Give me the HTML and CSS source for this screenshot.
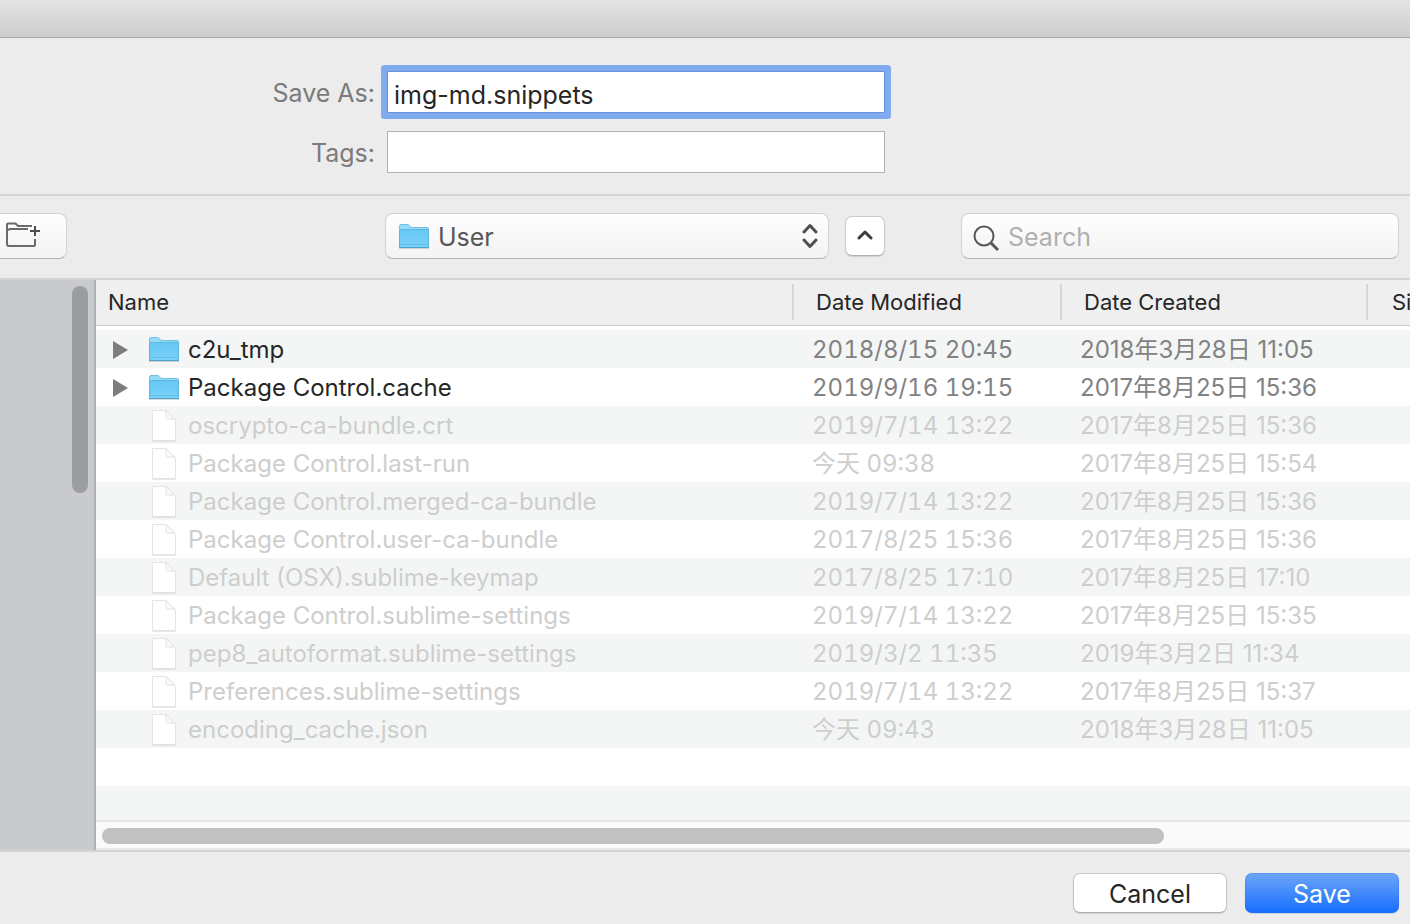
FILE: index.html
```html
<!DOCTYPE html>
<html lang="en">
<head>
<meta charset="utf-8">
<meta name="viewport" content="width=device-width, initial-scale=1">
<title>Save</title>
<link rel="stylesheet" href="styles.css">
</head>
<body>
<svg class="defs" width="0" height="0" aria-hidden="true">
  <defs>
    <linearGradient id="folder-fill" x1="0" y1="0" x2="0" y2="1">
      <stop offset="0" stop-color="#66c8f5"/>
      <stop offset="1" stop-color="#7bd2f8"/>
    </linearGradient>
    <symbol id="folder" viewBox="0 0 32 28">
      <path d="M1 25h30v1H1z" fill="#000" opacity=".15"/>
      <path d="M1.500 24V3.200Q1.500 1.500 3 1.500H9.500Q10.600 1.500 11.400 2.600L12.300 3.800Q12.800 4.500 14 4.500H29.500Q30.500 4.500 30.500 5.500V24Z" fill="#97dbf8" stroke="#72bfe0"/>
      <path d="M1 7h30v17.500Q31 25 30.500 25H1.500Q1 25 1 24.500Z" fill="url(#folder-fill)"/>
      <path d="M1.500 7V24M30.500 7V24M2 6.500H30" stroke="#5cb6dd" fill="none"/>
      <path d="M2 21.500H30" stroke="#62c0ea" fill="none"/>
      <path d="M1 24.500H31" stroke="#4aa3cb" fill="none"/>
    </symbol>
    <symbol id="file" viewBox="0 0 26 32">
      <path d="M1.500 31.500H24.500" stroke="#000" opacity=".09" fill="none"/>
      <path d="M1.500 .500H15L24.500 10V30.500H1.500Z" fill="#fff" stroke="#e3e4e4"/>
      <path d="M15 .500V7.500Q15 9 16.500 9H23.500Z" fill="#fafafa" stroke="#e0e1e1"/>
    </symbol>
    <symbol id="triangle" viewBox="0 0 16 18"><path d="M0 0L15 9L0 18Z" fill="#7d7d7d"/></symbol>
  </defs>
</svg>
<div class="dialog">
  <div class="titlebar"></div>

  <form class="fields">
    <label for="save-as">Save As:</label>
    <input class="field field-active" id="save-as" type="text" value="img-md.snippets">
    <label for="tags">Tags:</label>
    <input class="field" id="tags" type="text">
  </form>

  <div class="toolbar">
    <button class="control new-folder" type="button" aria-label="New Folder">
      <svg width="36" height="26" viewBox="0 0 36 26" fill="none" stroke="#6b6b6b" stroke-width="2">
        <path d="M27 4H13L10.500 1.500H3Q2 1.500 2 2.500V22Q2 24 4 24H29Q30 24 30 23V17M3 8L5 7H23"/>
        <path d="M30 4V14M25 9H35" stroke="#4c4c4c"/>
      </svg>
    </button>
    <div class="location">
      <div class="popup">
        <svg class="popup-folder" width="32" height="28" aria-hidden="true"><use href="#folder"/></svg>
        <select class="control" aria-label="Folder"><option>User</option></select>
        <svg class="popup-arrows" width="16" height="26" viewBox="0 0 16 26" fill="none" stroke="#4f4f4f" stroke-width="3" stroke-linecap="round" stroke-linejoin="round" aria-hidden="true">
          <path d="M2 9L8 2.500L14 9M2 17L8 23.500L14 17"/>
        </svg>
      </div>
      <button class="collapse" type="button" aria-label="Show less">
        <svg width="16" height="10" viewBox="0 0 16 10" fill="none" stroke="#3c3c3c" stroke-width="3" stroke-linecap="round" stroke-linejoin="round"><path d="M2 8L8 2L14 8"/></svg>
      </button>
    </div>
    <div class="search">
      <svg class="search-icon" width="28" height="28" viewBox="0 0 28 28" fill="none" stroke="#575757" stroke-width="2" aria-hidden="true">
        <circle cx="11" cy="11" r="9.500"/><path d="M18 18L25 25" stroke-width="3"/>
      </svg>
      <input class="control" type="search" placeholder="Search" aria-label="Search">
    </div>
  </div>

  <div class="browser">
    <aside class="sidebar"><div class="sidebar-thumb"></div></aside>
    <main class="list">
      <div class="rows">
        <table>
          <colgroup><col><col class="col-modified"><col class="col-created"><col class="col-size"></colgroup>
          <thead>
            <tr><th><span>Name</span></th><th><span>Date Modified</span></th><th><span>Date Created</span></th><th><span>Size</span></th></tr>
          </thead>
          <tbody>
            <tr class="folder"><td><div class="name"><svg class="disclosure" width="16" height="18"><use href="#triangle"/></svg><svg class="icon" width="32" height="28"><use href="#folder"/></svg>c2u_tmp</div></td><td>2018/8/15 20:45</td><td>2018年3月28日 11:05</td><td></td></tr>
            <tr class="folder"><td><div class="name"><svg class="disclosure" width="16" height="18"><use href="#triangle"/></svg><svg class="icon" width="32" height="28"><use href="#folder"/></svg>Package Control.cache</div></td><td>2019/9/16 19:15</td><td>2017年8月25日 15:36</td><td></td></tr>
            <tr><td><div class="name"><svg class="icon" width="26" height="32"><use href="#file"/></svg>oscrypto-ca-bundle.crt</div></td><td>2019/7/14 13:22</td><td>2017年8月25日 15:36</td><td></td></tr>
            <tr><td><div class="name"><svg class="icon" width="26" height="32"><use href="#file"/></svg>Package Control.last-run</div></td><td>今天 09:38</td><td>2017年8月25日 15:54</td><td></td></tr>
            <tr><td><div class="name"><svg class="icon" width="26" height="32"><use href="#file"/></svg>Package Control.merged-ca-bundle</div></td><td>2019/7/14 13:22</td><td>2017年8月25日 15:36</td><td></td></tr>
            <tr><td><div class="name"><svg class="icon" width="26" height="32"><use href="#file"/></svg>Package Control.user-ca-bundle</div></td><td>2017/8/25 15:36</td><td>2017年8月25日 15:36</td><td></td></tr>
            <tr><td><div class="name"><svg class="icon" width="26" height="32"><use href="#file"/></svg>Default (OSX).sublime-keymap</div></td><td>2017/8/25 17:10</td><td>2017年8月25日 17:10</td><td></td></tr>
            <tr><td><div class="name"><svg class="icon" width="26" height="32"><use href="#file"/></svg>Package Control.sublime-settings</div></td><td>2019/7/14 13:22</td><td>2017年8月25日 15:35</td><td></td></tr>
            <tr><td><div class="name"><svg class="icon" width="26" height="32"><use href="#file"/></svg>pep8_autoformat.sublime-settings</div></td><td>2019/3/2 11:35</td><td>2019年3月2日 11:34</td><td></td></tr>
            <tr><td><div class="name"><svg class="icon" width="26" height="32"><use href="#file"/></svg>Preferences.sublime-settings</div></td><td>2019/7/14 13:22</td><td>2017年8月25日 15:37</td><td></td></tr>
            <tr><td><div class="name"><svg class="icon" width="26" height="32"><use href="#file"/></svg>encoding_cache.json</div></td><td>今天 09:43</td><td>2018年3月28日 11:05</td><td></td></tr>
          </tbody>
        </table>
        <div class="empty-rows"></div>
      </div>
      <div class="scrollbar"><div class="scrollbar-thumb"></div></div>
    </main>
  </div>

  <footer class="actions">
    <button class="push" type="button">Cancel</button>
    <button class="push push-default" type="submit">Save</button>
  </footer>
</div>
</body>
</html>
```
FILE: styles.css
```css
* { box-sizing: border-box; }

body {
  margin: 0;
  background: #ececec;
  color: #262626;
  font-family: Inter, "Noto Sans CJK SC", sans-serif;
  font-size: 25px;
}

input, select, button { font: inherit; color: inherit; margin: 0; outline: 0; }
svg { display: block; flex: none; }
.defs { position: absolute; }

.dialog { display: flex; flex-direction: column; min-height: 100vh; }

.titlebar {
  height: 38px;
  background: linear-gradient(#e3e3e3, #cdcdcd);
  border-bottom: 1px solid #a5a5a5;
}

.fields {
  display: grid;
  grid-template-columns: 375px minmax(0, 498px);
  column-gap: 12px;
  row-gap: 18px;
  align-items: center;
  padding: 33px 0 21px;
  border-bottom: 2px solid #d4d4d4;
}
.fields label { padding-top: 3px; color: #7b7b7b; text-align: right; line-height: 39px; }

.field {
  width: 100%;
  height: 42px;
  padding: 6px 6px 0;
  background: #fff;
  border: 1px solid #b0b0b0;
  border-radius: 0;
}
.field-active { border-color: #6592d8; box-shadow: 0 0 0 6px #80abef; border-radius: 1px; }

.toolbar {
  display: grid;
  grid-template-columns: 385px minmax(0, 500px) minmax(0, 1fr);
  align-items: center;
  padding: 17px 0 19px;
  border-bottom: 2px solid #d4d4d4;
}

.control {
  height: 46px;
  background: linear-gradient(#fefefe, #f3f3f3);
  border: 1px solid #d2d2d2;
  border-bottom-color: #b2b2b2;
  border-radius: 8px;
  appearance: none;
}

.new-folder {
  width: 67px;
  padding: 0 0 3px 5px;
  border-left: 0;
  border-radius: 0 8px 8px 0;
}

.location { display: flex; align-items: center; gap: 16px; }
.popup { position: relative; flex: 1; min-width: 0; color: #575757; }
.popup select { display: block; width: 100%; padding: 2px 40px 0 52px; }
.popup-folder { position: absolute; left: 13px; top: 10px; }
.popup-arrows { position: absolute; right: 11px; top: 10px; }

.collapse {
  display: flex;
  align-items: center;
  justify-content: center;
  width: 40px;
  height: 40px;
  padding: 0 0 3px;
  background: #fff;
  border: 1px solid #cbcbcb;
  border-bottom-color: #b2b2b2;
  border-radius: 7px;
  box-shadow: 0 1px 1px #d0d0d0;
}

.search { position: relative; padding: 0 11px 0 76px; }
.search input { display: block; width: 100%; padding: 2px 12px 0 46px; }
.search input::placeholder { color: #b0b0b0; opacity: 1; }
.search-icon { position: absolute; left: 88px; top: 12px; }

.browser {
  display: flex;
  flex: 1;
  border-bottom: 2px solid #d4d4d4;
}

.sidebar {
  flex: none;
  width: 96px;
  padding: 6px 6px 0 72px;
  background: #c9cacd;
  border-right: 2px solid #aeb0b5;
}
.sidebar-thumb { width: 16px; height: 207px; background: #9c9da0; border-radius: 8px; }

.list { display: flex; flex: 1; flex-direction: column; min-width: 0; background: #fff; }
.rows { display: flex; flex: 1; flex-direction: column; overflow: hidden; }

table { width: 100%; table-layout: fixed; border-collapse: collapse; }
.col-modified { width: 268px; }
.col-created { width: 306px; }
.col-size { width: 42px; }

thead { background: #efefef; box-shadow: 0 1px 0 #c8c8c8; }
th { padding: 4px 0 5px; font-size: 22px; font-weight: 400; text-align: left; overflow: hidden; }
th span { display: block; padding-left: 22px; line-height: 36px; border-right: 2px solid #d6d6d6; }
th:first-child span { padding-left: 12px; }
th:last-child span { padding-left: 24px; border-right: 0; }

tbody::before { content: ""; display: block; height: 5px; }
tbody tr { height: 38px; color: #cdcecd; }
tbody tr:nth-child(odd) { background: #f4f6f5; }
td { padding: 2px 0 0 18px; font-size: 24px; white-space: nowrap; line-height: 36px; }
td:first-child { padding: 0; }
td:nth-child(2) { font-variant-numeric: tabular-nums; }
.folder { color: #828282; }
.folder .name { color: #262626; }

.name { display: flex; align-items: center; height: 38px; padding: 1px 0 0 55px; }
.name .icon { margin-right: 11px; }
.folder .name { padding-left: 17px; }
.folder .disclosure { margin-right: 19px; }
.folder .icon { margin-right: 8px; }

.empty-rows {
  flex: 1;
  min-height: 72px;
  background: repeating-linear-gradient(#fff 0 38px, #f4f6f5 38px 76px);
}

.scrollbar {
  padding: 6px;
  background: #fafafa;
  border-top: 2px solid #e7e8e8;
  border-bottom: 2px solid #ebebeb;
}
.scrollbar-thumb { width: 81.6%; height: 16px; margin-bottom: -2px; background: #c1c1c1; border-radius: 8px; }

.actions { display: flex; justify-content: flex-end; gap: 18px; padding: 21px 11px 11px; }
.push {
  width: 154px;
  height: 40px;
  padding: 2px 0 0;
  background: #fff;
  border: 1px solid #c6c6c6;
  border-bottom-color: #adadad;
  border-radius: 7px;
  box-shadow: 0 1px 1px #d4d4d4;
}
.push-default {
  color: #fff;
  background: linear-gradient(#6ea6f8, #156dfd);
  border: 0;
  box-shadow: inset 0 0 0 1px #2470e040, 0 1px 1px #c9d3e4;
}
```
